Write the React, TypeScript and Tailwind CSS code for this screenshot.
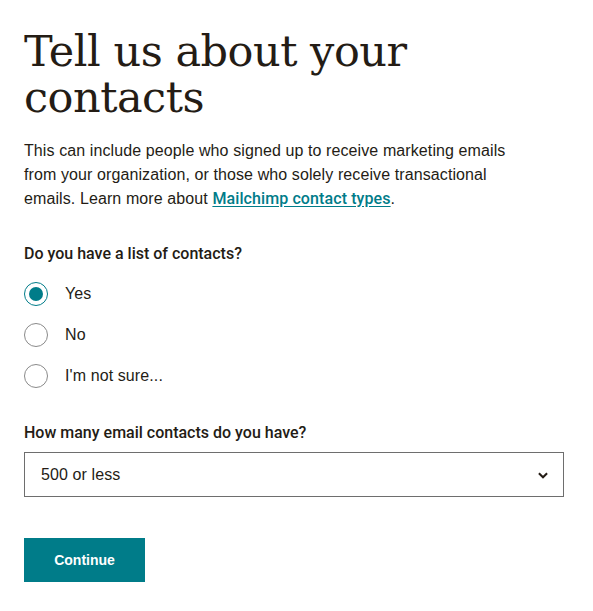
import React, { useState } from 'react';

// Radio options for the contacts question
const listOptions = [
  { value: 'yes', label: 'Yes' },
  { value: 'no', label: 'No' },
  { value: 'unsure', label: "I'm not sure..." },
];

const medium = { fontFamily: 'Roboto, "Liberation Sans", Arial, sans-serif' };

export default function App() {
  const [hasList, setHasList] = useState('yes');

  return (
    <div
      className="min-h-screen bg-white text-[#241c15]"
      style={{ fontFamily: '"Liberation Sans", Arial, sans-serif' }}
    >
      <div className="w-[588px] px-6 pt-[28px]">
        <h1
          className="text-[43px] leading-[46px] tracking-[-0.5px] text-[#241c15]"
          style={{ fontFamily: '"DejaVu Serif", Georgia, serif' }}
        >
          Tell us about your contacts
        </h1>

        <p className="mt-[19px] w-[510px] text-[16px] leading-[24px] tracking-[0.1px]">
          This can include people who signed up to receive marketing emails from your organization, or those who
          solely receive transactional emails. Learn more about{' '}
          <a href="#" className="font-medium text-[#007c89] underline underline-offset-2" style={medium}>
            Mailchimp contact types
          </a>
          .
        </p>

        <fieldset className="mt-[31px]">
          <legend className="text-[16px] font-medium leading-[24px]" style={medium}>
            Do you have a list of contacts?
          </legend>
          <div className="mt-[16px] flex flex-col gap-[17px]">
            {listOptions.map((opt) => {
              const checked = hasList === opt.value;
              return (
                <label key={opt.value} className="flex h-[24px] cursor-pointer items-center gap-[17px]">
                  <span
                    className={`flex h-[24px] w-[24px] items-center justify-center rounded-full border ${
                      checked ? 'border-[#007c89]' : 'border-[#8a8a8a]'
                    }`}
                  >
                    {checked && <span className="h-[14px] w-[14px] rounded-full bg-[#007c89]" />}
                  </span>
                  <input
                    type="radio"
                    name="hasList"
                    value={opt.value}
                    checked={checked}
                    onChange={() => setHasList(opt.value)}
                    className="sr-only"
                  />
                  <span className="text-[16px] tracking-[0.1px]">{opt.label}</span>
                </label>
              );
            })}
          </div>
        </fieldset>

        <div className="mt-[33px]">
          <label className="block text-[16px] font-medium leading-[24px]" style={medium}>
            How many email contacts do you have?
          </label>
          <div className="mt-[7px] flex h-[45px] w-[540px] items-center justify-between border border-[#6e6e6e] pl-4 pr-[13px]">
            <span className="text-[16px] tracking-[0.1px]">500 or less</span>
            <svg width="14" height="14" viewBox="0 0 24 24" fill="none" stroke="#241c15" strokeWidth="3.5">
              <path d="M5 9l7 7 7-7" />
            </svg>
          </div>
        </div>

        <button className="mt-[41px] h-[44px] w-[121px] bg-[#007c89] text-[14px] font-bold text-white">
          Continue
        </button>
      </div>
    </div>
  );
}
